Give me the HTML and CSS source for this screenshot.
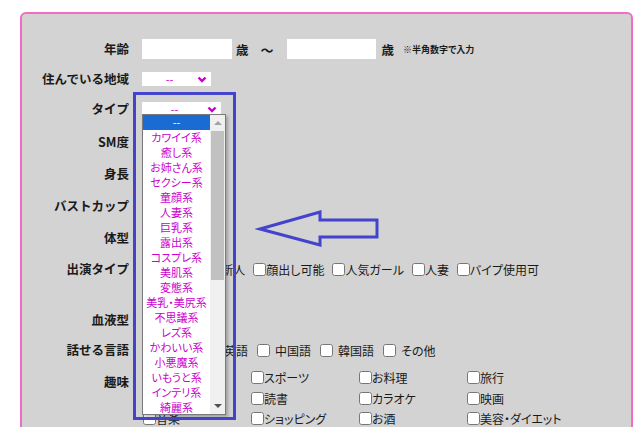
FILE: index.html
```html
<!DOCTYPE html>
<html lang="ja">
<head>
    <meta charset="UTF-8">
    <meta name="viewport" content="width=device-width, initial-scale=1.0">
    <title>検索条件</title>
    <link rel="stylesheet" href="styles.css">
</head>
<body>
    <div class="page">
        <form class="panel">
            <div class="row row-age">
                <div class="label">年齢</div>
                <div class="field age">
                    <input type="text" class="age-input">
                    <span class="unit">歳</span>
                    <span class="tilde">〜</span>
                    <input type="text" class="age-input age-input-2">
                    <span class="unit unit-2">歳</span>
                    <span class="note">※半角数字で入力</span>
                </div>
            </div>

            <div class="row row-area">
                <div class="label">住んでいる地域</div>
                <div class="field">
                    <div class="select select-area">
                        <span class="val">--</span>
                        <svg class="chev" width="10" height="7" viewBox="0 0 10 7"><polyline points="1.5,1.5 5,5 8.5,1.5" fill="none" stroke="#cc00cc" stroke-width="2.4"/></svg>
                    </div>
                </div>
            </div>

            <div class="row row-type">
                <div class="label">タイプ</div>
                <div class="field">
                    <div class="select select-type">
                        <span class="val">--</span>
                        <svg class="chev" width="10" height="7" viewBox="0 0 10 7"><polyline points="1.5,1.5 5,5 8.5,1.5" fill="none" stroke="#cc00cc" stroke-width="2.4"/></svg>

                        <!-- 開いた状態のリスト -->
                        <div class="dropdown">
                            <ul class="options">
                                <li class="selected">--</li>
                                <li>カワイイ系</li>
                                <li>癒し系</li>
                                <li>お姉さん系</li>
                                <li>セクシー系</li>
                                <li>童顔系</li>
                                <li>人妻系</li>
                                <li>巨乳系</li>
                                <li>露出系</li>
                                <li>コスプレ系</li>
                                <li>美肌系</li>
                                <li>変態系</li>
                                <li>美乳・美尻系</li>
                                <li>不思議系</li>
                                <li>レズ系</li>
                                <li>かわいい系</li>
                                <li>小悪魔系</li>
                                <li>いもうと系</li>
                                <li>インテリ系</li>
                                <li>綺麗系</li>
                            </ul>
                            <div class="scrollbar">
                                <div class="sb-btn sb-up"></div>
                                <div class="thumb"></div>
                                <div class="track"></div>
                                <div class="sb-btn sb-down"></div>
                            </div>
                        </div>
                    </div>
                </div>
            </div>

            <div class="row">
                <div class="label">SM度</div>
                <div class="field"></div>
            </div>

            <div class="row">
                <div class="label">身長</div>
                <div class="field"></div>
            </div>

            <div class="row">
                <div class="label">バストカップ</div>
                <div class="field"></div>
            </div>

            <div class="row">
                <div class="label">体型</div>
                <div class="field"></div>
            </div>

            <div class="row row-cast">
                <div class="label">出演タイプ</div>
                <div class="field checks">
                    <label class="check"><input type="checkbox">ギャル系</label>
                    <label class="check"><input type="checkbox">新人</label>
                    <label class="check"><input type="checkbox">顔出し可能</label>
                    <label class="check"><input type="checkbox">人気ガール</label>
                    <label class="check"><input type="checkbox">人妻</label>
                    <label class="check"><input type="checkbox">バイプ使用可</label>
                </div>
            </div>

            <div class="row row-blood">
                <div class="label">血液型</div>
                <div class="field">
                    <div class="select select-area">
                        <span class="val">--</span>
                    </div>
                </div>
            </div>

            <div class="row row-lang">
                <div class="label">話せる言語</div>
                <div class="field checks lang">
                    <label class="check"><input type="checkbox">日本語</label>
                    <label class="check"><input type="checkbox">英語</label>
                    <label class="check"><input type="checkbox">中国語</label>
                    <label class="check"><input type="checkbox">韓国語</label>
                    <label class="check"><input type="checkbox">その他</label>
                </div>
            </div>

            <div class="row row-hobby">
                <div class="label">趣味</div>
                <div class="field hobby">
                    <label><input type="checkbox">ゲーム</label>
                    <label><input type="checkbox">スポーツ</label>
                    <label><input type="checkbox">お料理</label>
                    <label><input type="checkbox">旅行</label>
                    <label><input type="checkbox">アニメ</label>
                    <label><input type="checkbox">読書</label>
                    <label><input type="checkbox">カラオケ</label>
                    <label><input type="checkbox">映画</label>
                    <label><input type="checkbox">音楽</label>
                    <label><input type="checkbox">ショッピング</label>
                    <label><input type="checkbox">お酒</label>
                    <label><input type="checkbox">美容・ダイエット</label>
                </div>
            </div>

            <!-- 注釈 -->
            <div class="annot-box"></div>
            <svg class="annot-arrow" width="128" height="42" viewBox="0 0 128 42">
                <polygon points="5,21 65,4 65,12 122,12 122,29 65,29 65,37" fill="none" stroke="#4343cc" stroke-width="3" stroke-linejoin="miter"/>
            </svg>
        </form>
    </div>
</body>
</html>
```

FILE: styles.css
```css
* {
    box-sizing: border-box;
}

body {
    margin: 0;
    background: #fff;
    color: #1a1a1a;
    font-family: "Noto Sans CJK JP", "Noto Sans", sans-serif;
    font-feature-settings: "palt";
    overflow: hidden;
}

.page {
    padding: 12px 9px 0 20px;
}

.panel {
    position: relative;
    margin: 0;
    height: 415px;
    overflow: hidden;
    padding-top: 20px;
    background: #d3d3d3;
    border: 2px solid #f26bc6;
    border-bottom: none;
    border-radius: 6px 6px 0 0;
}

.row {
    display: grid;
    grid-template-columns: 107px 1fr;
    column-gap: 13px;
    align-items: center;
    height: 32px;
}

.row-age {
    height: 30px;
}

.row-area {
    height: 28px;
}

.row-type {
    height: 34px;
}

.row-cast {
    height: 51px;
    align-items: start;
}

.row-blood,
.row-lang {
    height: 30px;
}

.row-hobby {
    height: auto;
    align-items: start;
}

.label {
    text-align: right;
    font-size: 12.5px;
    font-weight: bold;
    line-height: 30px;
    white-space: nowrap;
    font-feature-settings: normal;
}

.row-hobby .label {
    padding-top: 2px;
}

/* 年齢 */
.age {
    display: flex;
    align-items: center;
}

.age-input {
    width: 90px;
    height: 20px;
    padding: 0 3px;
    border: none;
    background: #fff;
    font: inherit;
}

.age-input-2 {
    width: 89px;
}

.unit {
    margin-left: 4px;
    font-size: 12.5px;
    font-weight: bold;
}

.unit-2 {
    margin-left: 6px;
}

.tilde {
    margin: 0 13px 0 12px;
    font-size: 13px;
    font-weight: bold;
}

.note {
    margin-left: 9px;
    font-size: 9px;
    font-weight: bold;
}

/* セレクト */
.select {
    position: relative;
    display: flex;
    align-items: center;
    height: 14px;
    background: #fff;
    color: #cc00cc;
    font-size: 11px;
}

.select .val {
    flex: 1;
    text-align: center;
    line-height: 14px;
}

.select .chev {
    margin-right: 4px;
}

.select-area {
    width: 69px;
}

.select-type {
    width: 79px;
}

.dropdown {
    position: absolute;
    top: 12px;
    left: 0;
    z-index: 2;
    display: flex;
    width: 84px;
    height: 301px;
    overflow: hidden;
    background: #fff;
    border: 1px solid #7a7a7a;
    box-shadow: 2px 2px 3px rgba(0, 0, 0, 0.25);
}

.options {
    width: 67px;
    margin: 0;
    padding: 0;
    list-style: none;
}

.options li {
    height: 15px;
    line-height: 15px;
    text-align: center;
    font-size: 11px;
    color: #cc00cc;
    white-space: nowrap;
}

.options li.selected {
    background: #1a6cd2;
    color: #fff;
}

.scrollbar {
    display: flex;
    flex-direction: column;
    align-items: center;
    width: 15px;
    background: #f0f0f0;
}

.sb-btn {
    display: flex;
    align-items: center;
    justify-content: center;
    width: 15px;
    height: 16px;
}

.sb-up::after {
    content: "";
    border-left: 4px solid transparent;
    border-right: 4px solid transparent;
    border-bottom: 4px solid #a3a3a3;
}

.sb-down::after {
    content: "";
    border-left: 4px solid transparent;
    border-right: 4px solid transparent;
    border-top: 4px solid #505050;
}

.thumb {
    width: 13px;
    height: 149px;
    background: #c1c1c1;
}

.track {
    flex: 1;
}

/* チェックボックス */
input[type="checkbox"] {
    flex: none;
    width: 13px;
    height: 13px;
    margin: 0 0 0 1px;
}

.checks {
    display: flex;
    align-items: center;
    height: 30px;
    font-size: 12px;
}

.check {
    display: inline-flex;
    align-items: center;
    margin-right: 7px;
    white-space: nowrap;
}

.lang .check {
    margin-right: 8px;
}

.lang .check input {
    margin-right: 5px;
}

.hobby {
    display: grid;
    grid-template-columns: repeat(4, 108px);
    grid-auto-rows: 20.5px;
    margin-top: 2.5px;
    font-size: 12px;
}

.hobby label {
    display: flex;
    align-items: center;
    white-space: nowrap;
}

/* 注釈 */
.annot-box {
    position: absolute;
    left: 111px;
    top: 78px;
    z-index: 3;
    width: 103px;
    height: 328px;
    border: 3px solid #4343cc;
    pointer-events: none;
}

.annot-arrow {
    position: absolute;
    left: 233px;
    top: 194px;
    z-index: 3;
}
```
